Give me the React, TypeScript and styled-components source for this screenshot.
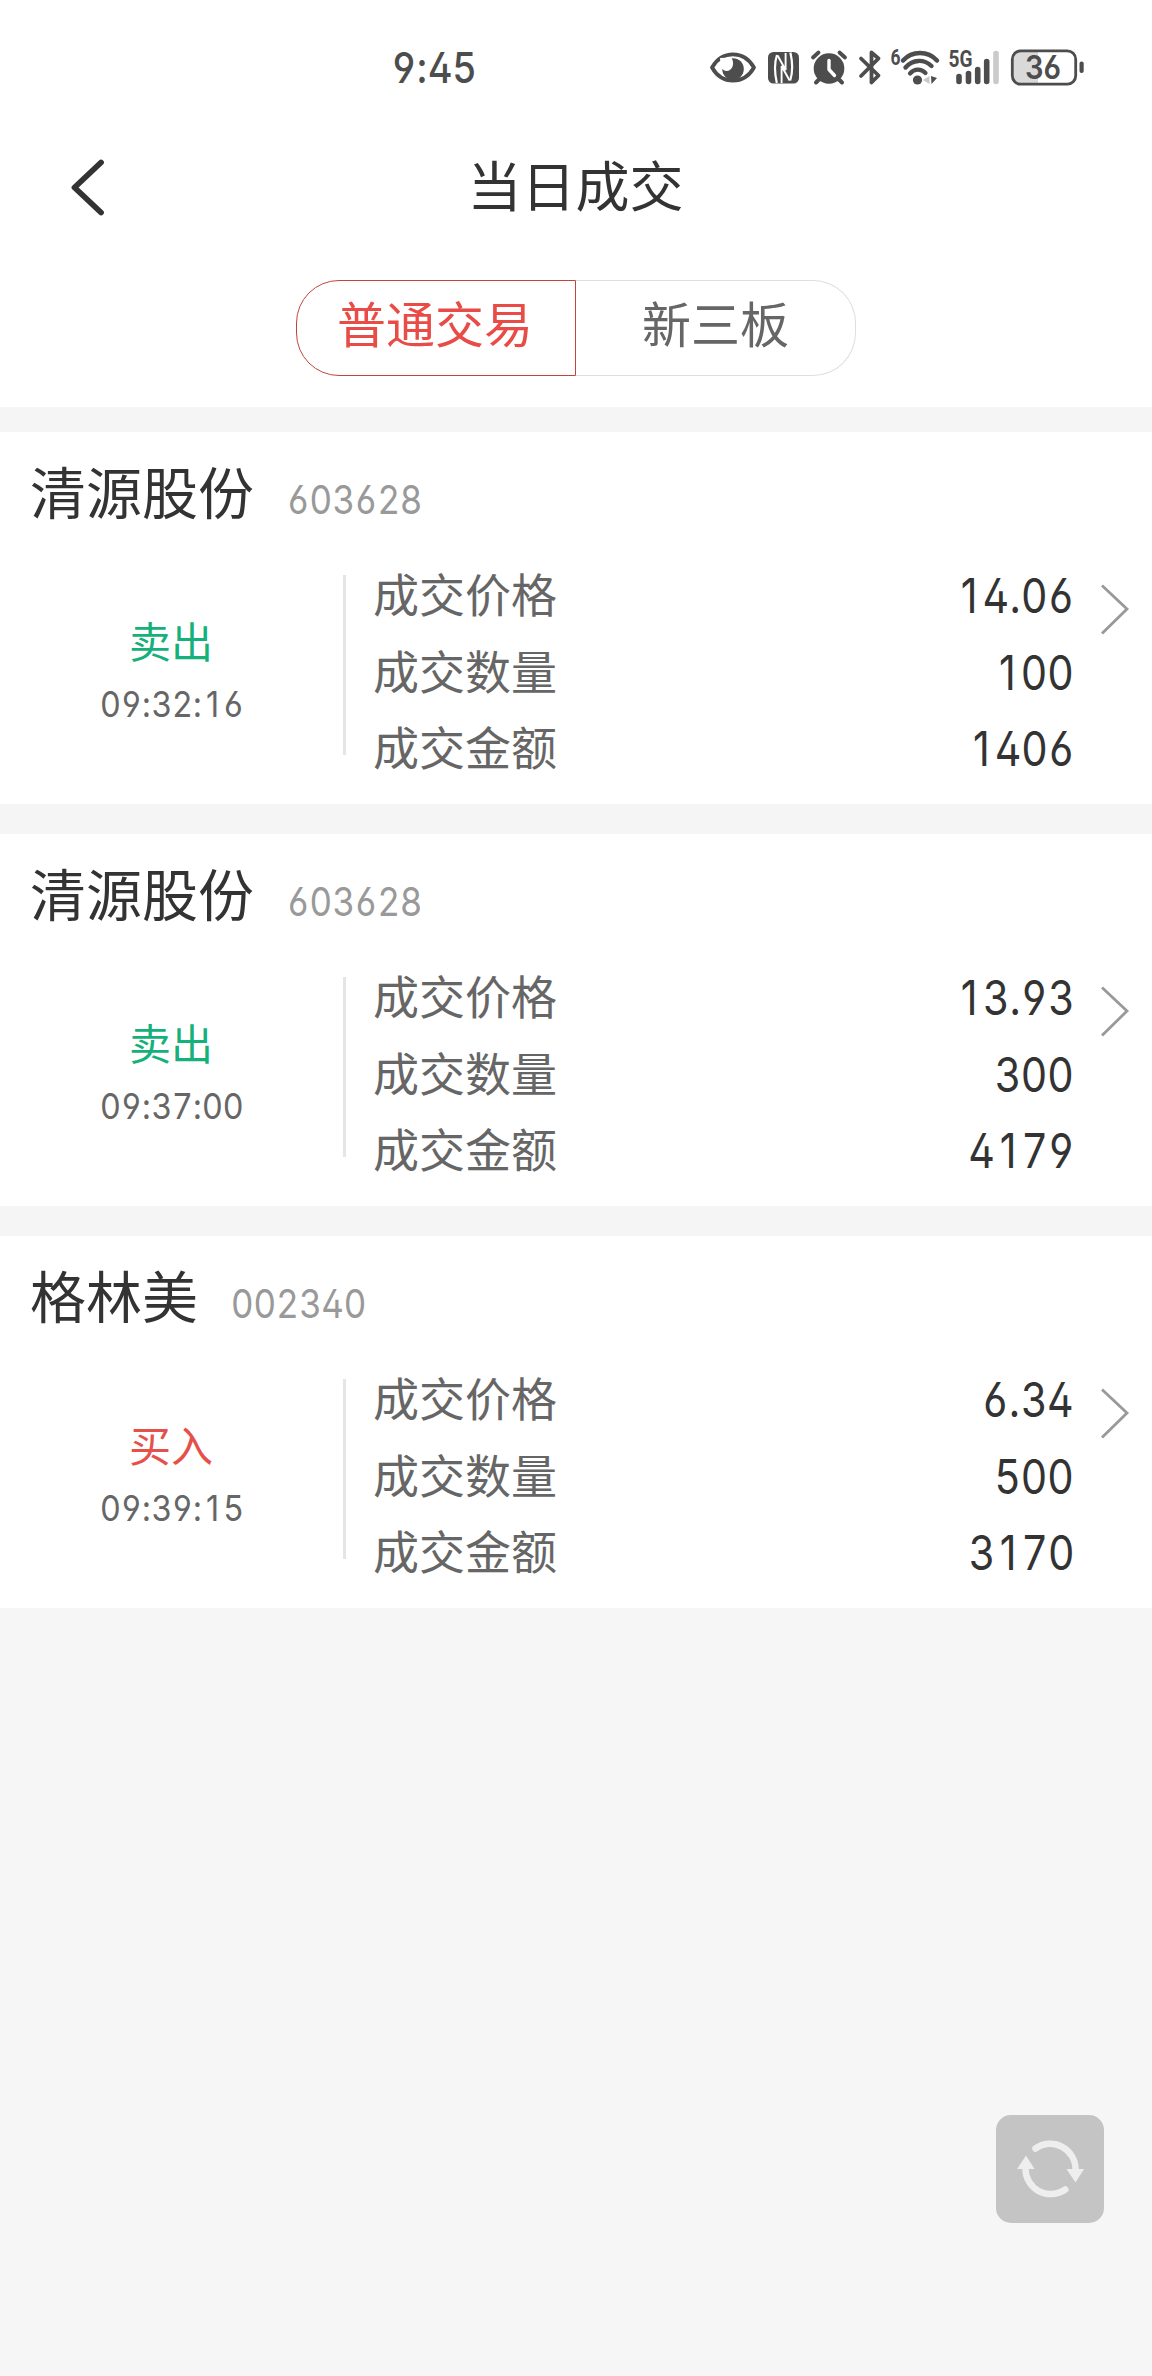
import React from 'react';
import styled, { createGlobalStyle } from 'styled-components';

const cjk = `"Noto Sans CJK SC", "Noto Sans", sans-serif`;
const latin = `Inter, "Noto Sans CJK SC", sans-serif`;

const GlobalStyle = createGlobalStyle`
  html, body { margin: 0; padding: 0; background: #f6f6f6; }
  * { box-sizing: border-box; }
`;

const Screen = styled.div`
  position: relative;
  width: 1152px;
  height: 2376px;
  overflow: hidden;
  background: #f6f6f6;
  font-family: ${cjk};
  color: #333;
`;

const DigitRun = styled.span<{ $size: number; $origin?: string; $weight?: number; $scale?: number }>`
  display: inline-block;
  font-family: ${latin};
  font-size: ${(p) => p.$size}px;
  font-weight: ${(p) => p.$weight ?? 400};
  line-height: 1.2;
  white-space: nowrap;
  font-kerning: none;
  font-feature-settings: 'cv02' 1, 'cv03' 1, 'cv04' 1;
  transform: scaleX(${(p) => p.$scale ?? 0.9});
  transform-origin: ${(p) => p.$origin ?? 'center'} center;
`;

const Figure = styled.span`
  display: inline-block;
  width: 0.645em;
  text-align: center;
`;

const Top = styled.header`
  height: 407px;
  background: #fff;
`;

const StatusBar = styled.div`
  display: flex;
  align-items: center;
  height: 136px;
  color: #4d4d4d;
`;

const Clock = styled.div`
  width: 708px;
  padding-left: 161px;
  text-align: center;
`;

const StatusIcon = styled.svg`
  display: block;
  flex: none;
  height: 44px;
`;

const NavBar = styled.div`
  display: grid;
  grid-template-columns: 176px 1fr 176px;
  align-items: center;
  height: 102px;
`;

const BackIcon = styled.svg`
  width: 40px;
  height: 62px;
  margin-left: 68px;
`;

const Title = styled.h1`
  margin: -6px 1px 0 0;
  text-align: center;
  font-size: 54px;
  font-weight: 400;
  line-height: 80px;
`;

const Tabs = styled.div`
  display: flex;
  justify-content: center;
  margin-top: 42px;
`;

const Tab = styled.button<{ $active?: boolean }>`
  width: 280px;
  height: 96px;
  padding: 0 ${(p) => (p.$active ? 2 : 0)}px 12px 0;
  background: #fff;
  border: 1px solid ${(p) => (p.$active ? '#c4433f' : '#dedede')};
  border-left-width: ${(p) => (p.$active ? 1 : 0)}px;
  border-radius: ${(p) => (p.$active ? '43px 0 0 43px' : '0 43px 43px 0')};
  color: ${(p) => (p.$active ? '#e94c46' : '#666')};
  font-family: ${cjk};
  font-size: 49px;
  line-height: 72px;
`;

const List = styled.main`
  display: flex;
  flex-direction: column;
  gap: 30px;
  padding-top: 25px;
  background: #f5f5f5;
`;

const Card = styled.section`
  height: 372px;
  background: #fff;
`;

const CardHead = styled.div`
  display: flex;
  align-items: center;
  height: 122px;
  padding: 0 30px 6px;
`;

const Name = styled.h2`
  margin: 0;
  font-size: 56px;
  font-weight: 400;
  line-height: 82px;
`;

const Code = styled.div`
  margin: 20px 0 0 33px;
  color: #999;
`;

const CardBody = styled.div`
  display: grid;
  grid-template-columns: 343px 3px 1fr 78px;
  height: 250px;
`;

const Side = styled.div`
  display: flex;
  flex-direction: column;
  align-items: center;
  padding-top: 55px;
`;

const Direction = styled.div<{ $buy: boolean }>`
  margin-right: 1px;
  font-size: 42px;
  line-height: 62px;
  color: ${(p) => (p.$buy ? '#e6504b' : '#16b07a')};
`;

const Time = styled.div`
  margin-top: 13px;
  color: #666;
`;

const Divider = styled.div`
  height: 180px;
  margin-top: 21px;
  background: #e5e5e5;
`;

const Rows = styled.div`
  padding-left: 27px;
`;

const Row = styled.div`
  display: flex;
  align-items: center;
  justify-content: space-between;
  height: 76.6px;
`;

const Label = styled.span`
  font-size: 46px;
  line-height: 68px;
  color: #666;
`;

const Value = styled.div`
  padding-top: 7px;
  color: #333;
`;

const Arrow = styled.svg`
  width: 32px;
  height: 54px;
  margin: 28px 0 0 25px;
`;

const Refresh = styled.button`
  position: absolute;
  left: 996px;
  top: 2115px;
  width: 108px;
  height: 108px;
  padding: 0;
  border: 0;
  border-radius: 15px;
  background: #c4c4c4;
`;

const trades = [
  { name: '清源股份', code: '603628', buy: false, time: '09:32:16', price: '14.06', qty: '100', amount: '1406' },
  { name: '清源股份', code: '603628', buy: false, time: '09:37:00', price: '13.93', qty: '300', amount: '4179' },
  { name: '格林美', code: '002340', buy: true, time: '09:39:15', price: '6.34', qty: '500', amount: '3170' },
];

const ink = '#4d4d4d';

/* Every figure sits in a cell of one width, so that columns of numbers line up. */
function Digits({ text, ...rest }: { text: string; $size: number; $origin?: string; $weight?: number; $scale?: number }) {
  return (
    <DigitRun {...rest}>
      {text.split('').map((c, i) => (/\d/.test(c) ? <Figure key={i}>{c}</Figure> : c))}
    </DigitRun>
  );
}

function StatusIcons() {
  return (
    <>
      <StatusIcon width="52" viewBox="708 46 52 44">
        <path d="M712 67.5C722 50 744 50 754 67.5C744 85 722 85 712 67.5Z" fill="none" stroke={ink} strokeWidth="3.8" strokeLinejoin="round" />
        <circle cx="733" cy="69" r="10.8" fill={ink} />
        <path d="M720 58L731 57.5C735 62 733 70.5 727 71C724 71 722.5 69.5 721 68Z" fill="#fff" />
      </StatusIcon>
      <StatusIcon width="44" viewBox="760 46 44 44">
        <rect x="768" y="52" width="31" height="31.5" rx="5.5" fill={ink} />
        <path d="M776.8 83C774.6 73 774.6 62 777 55" fill="none" stroke="#fff" strokeWidth="2.2" />
        <path d="M790.4 52.5C792.6 62 792.6 73 790.2 80.5" fill="none" stroke="#fff" strokeWidth="2.2" />
        <path d="M781.6 83V66L789.6 80.5M785.6 53V70L777.6 55.500" fill="none" stroke="#fff" strokeWidth="1.9" />
      </StatusIcon>
      <StatusIcon width="48" viewBox="804 46 48 44">
        <circle cx="829" cy="68.5" r="15.3" fill={ink} />
        <path d="M813 57.5L818.5 52.5M845 57.5L839.5 52.5" stroke={ink} strokeWidth="3.8" strokeLinecap="round" />
        <path d="M819.5 79L816 82.5M838.5 79L842 82.5" stroke={ink} strokeWidth="4" strokeLinecap="round" />
        <path d="M829 60.5V69.5L834.5 75.5" fill="none" stroke="#fff" strokeWidth="3.4" strokeLinecap="round" strokeLinejoin="round" />
      </StatusIcon>
      <StatusIcon width="36" viewBox="852 46 36 44">
        <path d="M861 58.5L878.5 75.5L871.5 82.5V52.5L878.5 58.5L861 76" fill="none" stroke={ink} strokeWidth="3.8" strokeLinecap="round" strokeLinejoin="round" />
      </StatusIcon>
      <StatusIcon width="58" viewBox="888 46 58 44">
        <text x="890.5" y="65" fontFamily="Roboto, sans-serif" fontWeight="700" fontSize="22" textLength="10" lengthAdjust="spacingAndGlyphs" fill={ink}>6</text>
        <path d="M903 60.5C912 50.5 928 50.5 937 60.5" fill="none" stroke={ink} strokeWidth="4.4" strokeLinecap="round" />
        <path d="M905.5 67.5C913 59 924 59 931.5 66" fill="none" stroke={ink} strokeWidth="4.4" strokeLinecap="round" />
        <path d="M910 73.5C914.5 68.5 921 68.5 925.5 73" fill="none" stroke={ink} strokeWidth="4.2" strokeLinecap="round" />
        <circle cx="917.5" cy="80" r="4.6" fill={ink} />
        <path d="M923 80L929.5 76V84Z" fill="#c8c8c8" />
        <path d="M931 76L937 78L931.5 84Z" fill={ink} />
      </StatusIcon>
      <StatusIcon width="58" viewBox="946 46 58 44">
        <text x="948.5" y="67" fontFamily="Roboto, sans-serif" fontWeight="700" fontSize="23" textLength="24" lengthAdjust="spacingAndGlyphs" fill={ink}>5G</text>
        <path d="M959 76.5V81.5M968.5 73.5V81.5M977.7 69.5V81.5M986.7 61.5V81.5" stroke={ink} strokeWidth="5.6" strokeLinecap="round" />
        <path d="M996 53.5V81.5" stroke="#cacaca" strokeWidth="5.6" strokeLinecap="round" />
      </StatusIcon>
      <StatusIcon width="84" viewBox="1004 46 84 44">
        <path d="M1038 51V85H1020q-8 0-8-8V59q0-8 8-8Z" fill="#d9d9d9" />
        <rect x="1012.3" y="50.8" width="63.4" height="33.4" rx="8.5" fill="none" stroke={ink} strokeWidth="2.8" />
        <rect x="1079.5" y="61.5" width="4.2" height="11.5" rx="2" fill={ink} />
        <text x="1025" y="79" fontFamily={latin} fontWeight="600" fontSize="32" textLength="36" lengthAdjust="spacingAndGlyphs" style={{ fontFeatureSettings: "'cv03' 1" }} fill={ink}>36</text>
      </StatusIcon>
    </>
  );
}

export default function App() {
  return (
    <Screen>
      <GlobalStyle />
      <Top>
        <StatusBar>
          <Clock>
            <Digits text="9:45" $size={43} $weight={500} $scale={0.88} />
          </Clock>
          <StatusIcons />
        </StatusBar>
        <NavBar>
          <BackIcon viewBox="0 0 40 62">
            <path d="M33 6.5L6.5 31.500L33 56.500" fill="none" stroke="#333" strokeWidth="5.8" strokeLinecap="round" strokeLinejoin="round" />
          </BackIcon>
          <Title>当日成交</Title>
        </NavBar>
        <Tabs>
          <Tab $active>普通交易</Tab>
          <Tab>新三板</Tab>
        </Tabs>
      </Top>
      <List>
        {trades.map((t) => (
          <Card key={t.time}>
            <CardHead>
              <Name>{t.name}</Name>
              <Code>
                <Digits text={t.code} $size={40} $origin="left" $scale={0.875} />
              </Code>
            </CardHead>
            <CardBody>
              <Side>
                <Direction $buy={t.buy}>{t.buy ? '买入' : '卖出'}</Direction>
                <Time>
                  <Digits text={t.time} $size={35.5} $scale={0.91} />
                </Time>
              </Side>
              <Divider />
              <Rows>
                {[['成交价格', t.price], ['成交数量', t.qty], ['成交金额', t.amount]].map(([label, value]) => (
                  <Row key={label}>
                    <Label>{label}</Label>
                    <Value>
                      <Digits text={value} $size={47.5} $origin="right" $scale={0.868} />
                    </Value>
                  </Row>
                ))}
              </Rows>
              <Arrow viewBox="0 0 32 54">
                <path d="M3 3.5L28 27L3 51.5" fill="none" stroke="#999" strokeWidth="2.8" />
              </Arrow>
            </CardBody>
          </Card>
        ))}
      </List>
      <Refresh aria-label="刷新">
        <svg width="108" height="108" viewBox="0 0 108 108">
          <path d="M39.5 33.5A25.3 25.3 0 0 1 79.5 55" fill="none" stroke="#eee" strokeWidth="6.5" strokeLinecap="round" />
          <path d="M70.5 54H88L79.5 67.5Z" fill="#eee" />
          <path d="M69.3 74.5A25.3 25.3 0 0 1 29.5 53" fill="none" stroke="#eee" strokeWidth="6.5" strokeLinecap="round" />
          <path d="M21 54H38.5L30 40.5Z" fill="#eee" />
        </svg>
      </Refresh>
    </Screen>
  );
}
